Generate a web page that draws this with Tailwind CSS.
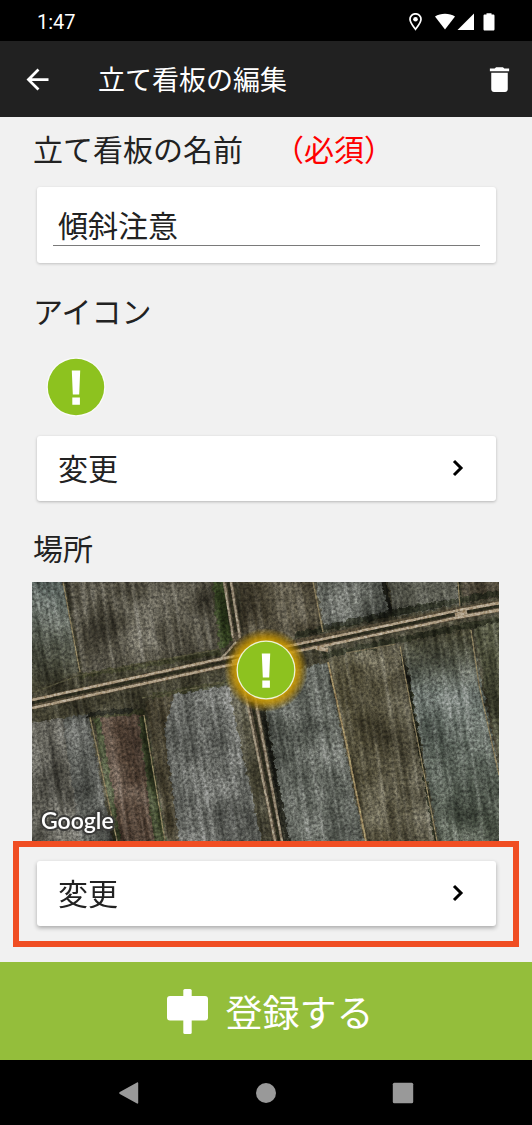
<!DOCTYPE html>
<html lang="ja">
<head>
<meta charset="utf-8">
<meta name="viewport" content="width=device-width, initial-scale=1">
<title>立て看板の編集</title>
<script src="https://cdn.jsdelivr.net/npm/@tailwindcss/browser@4"></script>
</head>
<body class="min-h-screen flex flex-col bg-[#f1f1f1] text-[#222] font-['Roboto','Noto_Sans_CJK_JP',sans-serif]">

<!-- Status bar -->
<div class="h-[41px] pl-[37px] pr-[36px] flex items-center justify-between bg-black text-white">
  <span class="text-[20px] leading-6 pt-0.5">1:47</span>
  <svg class="w-[88px] h-[18px] mt-0.5" viewBox="0 0 88 18" fill="#fff" aria-hidden="true">
    <path fill="none" stroke="#fff" stroke-width="1.7" d="M7.500 16.300C5.200 13.300 2 9.600 2 6.300a5.500 5.500 0 0 1 11 0c0 3.300-3.200 7-5.500 10z"/>
    <circle cx="7.500" cy="6.300" r="2.300"/>
    <path d="M27 3.600C32.500-.2 41.500-.2 47 3.600L37 16.500z"/>
    <path d="M66 0.500V17H49.500z"/>
    <path d="M78.500 1.500V0.300h5v1.200h1.700c.8 0 1.300.5 1.300 1.200v13.500c0 .8-.5 1.300-1.300 1.300h-8.400c-.8 0-1.300-.5-1.300-1.300V2.700c0-.7.5-1.200 1.300-1.200z"/>
  </svg>
</div>

<!-- App bar -->
<header class="h-[76px] pl-[21px] pr-[16px] flex items-center bg-[#212121] text-white">
  <button type="button" aria-label="戻る">
    <svg class="size-[33px]" viewBox="0 0 24 24" fill="currentColor"><path d="M20 11H7.830l5.590-5.590L12 4l-8 8 8 8 1.410-1.410L7.830 13H20v-2z"/></svg>
  </button>
  <h1 class="ml-[44px] flex-1 text-[27px] leading-10 font-['Noto_Sans_CJK_JP',sans-serif]">立て看板の編集</h1>
  <button type="button" aria-label="削除">
    <svg class="size-[33px]" viewBox="0 0 24 24" fill="currentColor"><path d="M6 19c0 1.100.9 2 2 2h8c1.100 0 2-.9 2-2V7H6v12zM19 4h-3.500l-1-1h-5l-1 1H5v2h14V4z"/></svg>
  </button>
</header>

<main class="pt-[14px] pb-[15px] flex-1">
  <div class="ml-[33px] flex gap-[31px] text-[30px] leading-10">
    <label for="name">立て看板の名前</label>
    <span class="text-[#ff0000]">（必須）</span>
  </div>
  <div class="mt-[16px] ml-[37px] mr-[36px] pt-[17px] px-[16px] pb-[17px] bg-white rounded-[3px] shadow-[0_1px_3px_rgba(0,0,0,0.2)]">
    <input id="name" type="text" value="傾斜注意" class="block w-full h-[42px] px-[5px] pb-0.5 bg-transparent border-b border-[#7a7a7a] text-[30px] leading-10 outline-none">
  </div>

  <h2 class="mt-[30px] ml-[33px] text-[30px] leading-10">アイコン</h2>
  <svg class="block mt-[24px] ml-[46px] size-[60px]" viewBox="0 0 60 60" role="img" aria-label="注意">
    <circle cx="30" cy="30" r="29.500" fill="#fbfbfb"/>
    <circle cx="30" cy="30" r="28.200" fill="#8dc21f"/>
    <path fill="#fff" d="M25.800 13.500h8.400l-1 24h-6.400zM26.300 40.500h7.600v7.300h-7.600z"/>
  </svg>
  <button type="button" class="mt-[19px] ml-[37px] w-[calc(100%-73px)] h-[65px] pl-[21px] pr-[22px] pb-px flex items-center justify-between bg-white rounded-[3px] shadow-[0_1px_3px_rgba(0,0,0,0.25)] text-[30px] leading-10">
    <span class="pt-[3px]">変更</span>
    <svg class="size-[32px]" viewBox="0 0 32 32" fill="none" stroke="#000" stroke-width="3"><path d="M12 9l7 7-7 7"/></svg>
  </button>

  <h2 class="mt-[29px] ml-[33px] text-[30px] leading-10">場所</h2>
  <div class="mt-[12px] ml-[32px] mr-[33px]">
    <svg class="block w-full" viewBox="0 0 467 259" role="img" aria-label="航空写真の地図">
      <defs>
        <filter id="grain" x="0" y="0" width="100%" height="100%" color-interpolation-filters="sRGB">
          <feTurbulence type="fractalNoise" baseFrequency="0.35" numOctaves="3" seed="4"/>
          <feColorMatrix type="matrix" values="1.6 0 0 0 -0.27  1.6 0 0 0 -0.27  1.6 0 0 0 -0.27  0 0 0 0 1"/>
        </filter>
        <filter id="streaks" x="0" y="0" width="100%" height="100%" color-interpolation-filters="sRGB">
          <feTurbulence type="fractalNoise" baseFrequency="0.2 0.01" numOctaves="2" seed="9"/>
          <feColorMatrix type="matrix" values="1.4 0 0 0 -0.15  1.4 0 0 0 -0.15  1.4 0 0 0 -0.15  0 0 0 0 1"/>
        </filter>
        <filter id="patches" x="0" y="0" width="100%" height="100%" color-interpolation-filters="sRGB">
          <feTurbulence type="fractalNoise" baseFrequency="0.022" numOctaves="3" seed="12"/>
          <feColorMatrix type="matrix" values="1.4 0 0 0 -0.15  1.4 0 0 0 -0.15  1.4 0 0 0 -0.15  0 0 0 0 1"/>
        </filter>
        <filter id="rough" x="-5%" y="-5%" width="110%" height="110%" color-interpolation-filters="sRGB">
          <feTurbulence type="fractalNoise" baseFrequency="0.2" numOctaves="2" seed="2"/>
          <feDisplacementMap in="SourceGraphic" scale="6" xChannelSelector="R" yChannelSelector="G"/>
          <feGaussianBlur stdDeviation="0.500"/>
        </filter>
        <filter id="soft" x="-5%" y="-5%" width="110%" height="110%"><feGaussianBlur stdDeviation="0.500"/></filter>
        <radialGradient id="glow">
          <stop offset="0.650" stop-color="#dcaa00"/>
          <stop offset="0.800" stop-color="#c49200" stop-opacity="0.700"/>
          <stop offset="1" stop-color="#a07800" stop-opacity="0"/>
        </radialGradient>
        <linearGradient id="fieldA" x2="0" y2="1"><stop stop-color="#59635f"/><stop offset="1" stop-color="#3e3d2d"/></linearGradient>
        <linearGradient id="fieldK" x2="0" y2="1"><stop stop-color="#3f3e2c"/><stop offset="0.300" stop-color="#5f6761"/><stop offset="1" stop-color="#454c40"/></linearGradient>
        <linearGradient id="fieldJ"><stop stop-color="#47432f"/><stop offset="0.500" stop-color="#4b4735"/><stop offset="1" stop-color="#5c5949"/></linearGradient>
        <clipPath id="frame"><path d="M0 0h467v259H0z"/></clipPath>
      </defs>
      <g clip-path="url(#frame)">
        <path fill="#3d3b2c" d="M0 0h467v259H0z"/>
        <!-- Fields -->
        <g filter="url(#rough)">
          <path fill="url(#fieldA)" d="M-5-5h35l18 95-53 20z"/>
          <path fill="#49463a" d="M33-5h145l9 75-136 21z"/>
          <path fill="#354222" d="M180-5h12l8 63-12 10z"/>
          <path fill="#413c2d" d="M207-5h73l11 55-80 14z"/>
          <path fill="#595c55" d="M283-5h69l7 39-67 13z"/>
          <path fill="#515248" d="M356-5h69l4 27-67 13z"/>
          <path fill="#443e30" d="M429-5h43v19l-41 8z"/>
          <path fill="#605f57" d="M-5 142l35-6 22 128H-5z"/>
          <path fill="#4c4e49" d="M30 136l26-4 26 132H50z"/>
          <path fill="#514236" d="M61 134l50-2 22 132H85z"/>
          <path fill="#384027" d="M62 136h6l22 128h-6zM106 134h7l22 130h-12z"/>
          <path fill="#5e605b" d="M115 119l80-18 36 163h-96z"/>
          <path fill="#413c2c" d="M114 119l28-8-10 38 16 115h-13z"/>
          <path fill="#5a5e57" d="M228 96l67-16 38 184h-78z"/>
          <path fill="url(#fieldJ)" d="M297 76l70-14 38 202h-72z"/>
          <path fill="url(#fieldK)" d="M371 61l68-13 33 166v50h-65z"/>
          <path fill="#4a4c39" d="M441 46l31-8v160z"/>
          <path fill="#35352a" d="M226 130l7-4 24 138h-7z"/>
        </g>
        <!-- Ditches and hedges -->
        <g fill="none" filter="url(#rough)">
          <path stroke="#1d2015" stroke-width="6" opacity="0.800" d="M262 54l95-22 110-21M290 74l40-8 137-29"/>
          <path stroke="#333620" stroke-width="5" opacity="0.800" d="M120 114l80-14M48 94l140-24M57 134l55-4"/>
          <path stroke="#1e1f18" stroke-width="4" d="M352 0l7 32M369 72l8 30M230 128l26 131M55 133l45-5"/>
          <path stroke="#1e2116" stroke-width="2.500" d="M377 102l26 157M426 0l3 24"/>
        </g>
        <g class="mix-blend-soft-light">
          <path filter="url(#streaks)" transform="rotate(-9 233 130)" opacity="0.500" d="M-60-60h600v400H-60z"/>
        </g>
        <path class="mix-blend-soft-light" filter="url(#patches)" opacity="0.600" d="M0 0h467v259H0z"/>
        <!-- Field paths -->
        <g fill="none" stroke="#85795a" stroke-width="1.300" filter="url(#soft)">
          <path d="M31 0l17 90M58 135l27 124M112 133l21 126M281 0l10 50M426 0l2 25M368 64l6 35 31 160M439 48l8 55 20 90"/>
          <path stroke="#9c8a62" stroke-width="1.800" d="M296 80l18 80 20 99"/>
          <path stroke="#6f6750" d="M314 71l50-9"/>
          <path stroke="#4f4d38" d="M110 116l84-16M0 111l48-18 140-26"/>
        </g>
        <!-- Farm roads -->
        <g fill="none" filter="url(#soft)">
          <path stroke="#4f4636" stroke-width="12" d="M0 122l188-41 73-17 167-33 39-7"/>
          <path stroke="#4f4738" stroke-width="10" d="M196 0l10 60 15 60 25 139"/>
          <path stroke="#2b291f" stroke-width="3" d="M0 121l188-40 73-15 167-35 39-7M196 0l8 50M220 120l27 139"/>
          <path stroke="#ac9c83" stroke-width="2.800" d="M0 118l188-41 73-14 30-6 137-29 39-7M0 126l188-41 73-15 30-6 137-29 39-7"/>
          <path stroke="#978b76" stroke-width="2.200" d="M192 0l9 56M199 0l9 56M206 80l9 40 21 103 7 36M218 80l7 46 25 133M188 78l16-18"/>
          <path stroke="#a8987f" stroke-width="4" d="M423 33l12-3M284 66l12 2M200 80l30-7"/>
        </g>
        <path class="mix-blend-overlay" filter="url(#grain)" opacity="0.350" d="M0 0h467v259H0z"/>
        <!-- Sign marker -->
        <circle cx="234" cy="88" r="42" fill="url(#glow)"/>
        <circle cx="234" cy="88" r="29.500" fill="#eef3d8"/>
        <circle cx="234" cy="88" r="28.200" fill="#8dc21f"/>
        <path fill="#fff" d="M229.800 71.500h8.400l-1 24h-6.400zM230.300 98.500h7.600v7.300h-7.600z"/>
      </g>
      <text x="9" y="247" font-family="Lato, sans-serif" font-weight="600" font-size="23" fill="#fff" stroke="#3a3a38" stroke-width="4" stroke-linejoin="round" paint-order="stroke">Google</text>
    </svg>
  </div>

  <!-- Highlighted control -->
  <div class="mx-[13px] border-6 border-[#f04e23] pt-[14px] pb-[15px] pl-[18px] pr-[17px]">
    <button type="button" class="w-full h-[65px] pl-[21px] pr-[22px] pb-px flex items-center justify-between bg-white rounded-[3px] shadow-[0_2px_4px_rgba(0,0,0,0.3)] text-[30px] leading-10">
      <span class="pt-[3px]">変更</span>
      <svg class="size-[32px]" viewBox="0 0 32 32" fill="none" stroke="#000" stroke-width="3"><path d="M12 9l7 7-7 7"/></svg>
    </button>
  </div>
</main>

<button type="button" class="h-[98px] pl-2 flex items-center justify-center gap-[18px] bg-[#94be3b] text-white text-[37px] leading-[48px] font-['Noto_Sans_CJK_JP',sans-serif]">
  <svg class="w-[41px] h-[45px]" viewBox="0 0 41 45" fill="currentColor"><rect x="16.300" width="8.400" height="45" rx="1.500"/><rect y="7" width="41" height="24.500" rx="3"/></svg>
  登録する
</button>

<nav class="h-[65px] flex items-center justify-center gap-[115px] bg-black text-[#999]">
  <button type="button" aria-label="バック"><svg class="size-[22px]" viewBox="0 0 22 22" fill="currentColor"><path d="M1.800 10.100 19 .4c.6-.3 1.200 0 1.200.6v20c0 .6-.6.9-1.200.6L1.800 11.900c-.8-.5-.8-1.300 0-1.800z"/></svg></button>
  <button type="button" aria-label="ホーム"><svg class="size-[22px]" viewBox="0 0 22 22" fill="currentColor"><circle cx="11" cy="11" r="10"/></svg></button>
  <button type="button" aria-label="履歴"><svg class="size-[22px]" viewBox="0 0 22 22" fill="currentColor"><rect x="0.800" y="0.800" width="20.400" height="20.400" rx="1.500"/></svg></button>
</nav>
</body>
</html>
